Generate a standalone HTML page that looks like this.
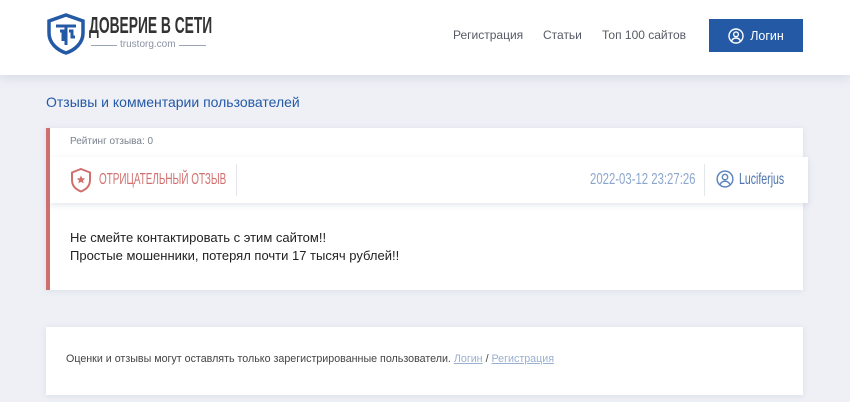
<!DOCTYPE html>
<html><head><meta charset="utf-8"><style>
*{margin:0;padding:0;box-sizing:border-box}
body{width:850px;height:402px;overflow:hidden;background:#eef0f6;font-family:"Liberation Sans",sans-serif;position:relative}
.hdr{position:absolute;left:0;top:0;width:850px;height:75px;background:#fff;box-shadow:0 3px 10px rgba(120,130,160,.18)}
.abs{position:absolute;white-space:nowrap}
.cond{display:inline-block;transform-origin:left center}
.nav{font-size:12px;color:#555b66;top:28px}
.btn{left:709px;top:19px;width:94px;height:33px;background:#2459a6;color:#fff;font-size:12.5px;display:flex;align-items:center;justify-content:center;gap:6px}
.card{position:absolute;left:46px;width:757px;background:#fff;box-shadow:0 1px 6px rgba(120,130,160,.15)}
</style></head><body>
<div class="hdr"></div>
<svg class="abs" style="left:46px;top:13px" width="40" height="42" viewBox="0 0 40 42">
<path d="M20 2 L37 8 V20 C37 30 29 37 20 40 C11 37 3 30 3 20 V8 Z" fill="none" stroke="#2459a6" stroke-width="3.5"/>
<path d="M10 13 H30 M20 13 V32 M14 18 H17 V28 M23 18 H26 V24 H29" fill="none" stroke="#2459a6" stroke-width="3"/>
</svg>
<div class="abs" style="left:89px;top:12px;font-size:23px;font-weight:bold;color:#333;"><span class="cond" style="transform:scaleX(.6)">ДОВЕРИЕ В СЕТИ</span></div>
<div class="abs" style="left:91px;top:45px;width:115px;height:1px;background:#9aa3b5"></div>
<div class="abs" style="left:117px;top:39px;font-size:10px;color:#8a92a3;background:#fff;padding:0 3px">trustorg.com</div>
<div class="abs nav" style="left:453px">Регистрация</div>
<div class="abs nav" style="left:543px">Статьи</div>
<div class="abs nav" style="left:602px">Топ 100 сайтов</div>
<div class="abs btn"><svg width="16" height="16" viewBox="0 0 16 16"><circle cx="8" cy="8" r="7" fill="none" stroke="#fff" stroke-width="1.4"/><circle cx="8" cy="6.3" r="2.4" fill="none" stroke="#fff" stroke-width="1.4"/><path d="M3.5 13c1-2.2 2.6-3 4.5-3s3.5.8 4.5 3" fill="none" stroke="#fff" stroke-width="1.4"/></svg>Логин</div>

<div class="abs" style="left:46px;top:94px;font-size:14px;color:#2459a6">Отзывы и комментарии пользователей</div>

<div class="card" style="top:128px;height:162px;border-left:4px solid #d0706e"></div>
<div class="abs" style="left:70px;top:136px;font-size:10px;color:#7a808c">Рейтинг отзыва: 0</div>
<div class="abs" style="left:50px;top:157px;width:758px;height:46px;background:#fff;box-shadow:0 2px 6px rgba(120,130,160,.2)"></div>
<svg class="abs" style="left:69px;top:167px" width="24" height="26" viewBox="0 0 24 26"><path d="M12 2 L21 5.5 V13 C21 19 17 22.5 12 24.5 C7 22.5 3 19 3 13 V5.5 Z" fill="none" stroke="#d0706e" stroke-width="2"/><path d="M12 8.5 l1.3 2.7 2.9.3-2.2 2 .7 2.9-2.7-1.5-2.7 1.5.7-2.9-2.2-2 2.9-.3z" fill="#d0706e"/></svg>
<div class="abs" style="left:99px;top:171px;font-size:16px;color:#d0706e"><span class="cond" style="transform:scaleX(.62)">ОТРИЦАТЕЛЬНЫЙ ОТЗЫВ</span></div>
<div class="abs" style="left:236px;top:164px;width:1px;height:32px;background:#e3e6ec"></div>
<div class="abs" style="left:590px;top:171px;font-size:16px;color:#8ba6cc"><span class="cond" style="transform:scaleX(.71)">2022-03-12 23:27:26</span></div>
<div class="abs" style="left:704px;top:164px;width:1px;height:32px;background:#e3e6ec"></div>
<svg class="abs" style="left:716px;top:170px" width="18" height="18" viewBox="0 0 16 16"><circle cx="8" cy="8" r="7" fill="none" stroke="#5f86c0" stroke-width="1.3"/><circle cx="8" cy="6.3" r="2.4" fill="none" stroke="#5f86c0" stroke-width="1.3"/><path d="M3.5 13c1-2.2 2.6-3 4.5-3s3.5.8 4.5 3" fill="none" stroke="#5f86c0" stroke-width="1.3"/></svg>
<div class="abs" style="left:739px;top:171px;font-size:16px;color:#4d73ad"><span class="cond" style="transform:scaleX(.66)">Luciferjus</span></div>
<div class="abs" style="left:70px;top:229px;font-size:13px;color:#222;line-height:18px">Не смейте контактировать с этим сайтом!!<br>Простые мошенники, потерял почти 17 тысяч рублей!!</div>

<div class="card" style="top:327px;height:68px"></div>
<div class="abs" style="left:66px;top:353px;font-size:10.7px;color:#444">Оценки и отзывы могут оставлять только зарегистрированные пользователи. <span style="color:#9ab0cf;text-decoration:underline">Логин</span> / <span style="color:#9ab0cf;text-decoration:underline">Регистрация</span></div>
</body></html>
